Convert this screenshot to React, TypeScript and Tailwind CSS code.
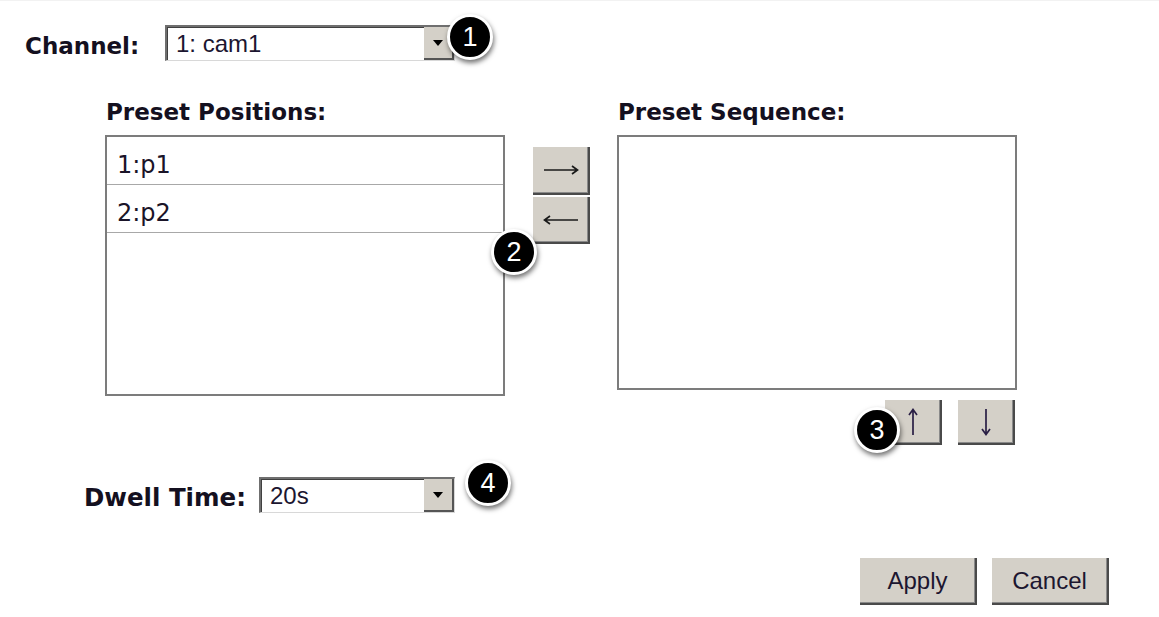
import React from 'react';

// Numbered callout bubble placed over a control
function Badge({ n, className }: { n: number; className: string }) {
  return (
    <div
      className={`absolute w-[46px] h-[46px] rounded-full bg-black border-[3px] border-white shadow-[1px_3px_5px_rgba(0,0,0,0.55)] flex items-center justify-center text-white text-[27px] font-['Liberation_Sans',Arial,sans-serif] leading-none ${className}`}
    >
      {n}
    </div>
  );
}

function Select({ value, width }: { value: string; width: string }) {
  return (
    <div
      className={`${width} h-[36px] flex bg-white border-t-2 border-l-2 border-[#6f6f6f] border-r border-b border-r-[#d8d8d8] border-b-[#d8d8d8] shadow-[inset_1px_1px_0_#404040]`}
    >
      <div className="flex-1 flex items-center pl-[9px] text-[24px] text-[#1c1630] font-['Liberation_Sans',Arial,sans-serif]">
        {value}
      </div>
      <div className="w-[30px] h-full bg-[#d4d0c8] border-r-2 border-b-2 border-[#555] flex items-center justify-center">
        <svg width="10" height="6" viewBox="0 0 10 6">
          <path d="M0 0 H10 L5 6 Z" fill="#000" />
        </svg>
      </div>
    </div>
  );
}

function ArrowH({ dir }: { dir: 'left' | 'right' }) {
  return (
    <svg width="36" height="12" viewBox="0 0 36 12">
      {dir === 'right' ? (
        <path d="M1 6 H34 M29 2 L34.5 6 L29 10" stroke="#1a1a1a" strokeWidth="1.7" fill="none" />
      ) : (
        <path d="M35 6 H2 M7 2 L1.5 6 L7 10" stroke="#1a1a1a" strokeWidth="1.7" fill="none" />
      )}
    </svg>
  );
}

function ArrowV({ dir }: { dir: 'up' | 'down' }) {
  return (
    <svg width="12" height="28" viewBox="0 0 12 28">
      {dir === 'up' ? (
        <path d="M6 27 V2 M2 7 L6 1.5 L10 7" stroke="#2a1f45" strokeWidth="1.7" fill="none" />
      ) : (
        <path d="M6 1 V26 M2 21 L6 26.5 L10 21" stroke="#2a1f45" strokeWidth="1.7" fill="none" />
      )}
    </svg>
  );
}

const btn =
  'bg-[#d4d0c8] border-r-2 border-b-2 border-[#4a4a4a] shadow-[inset_-1px_-1px_0_#8a8a8a] flex items-center justify-center';

export default function App() {
  const label = "font-['DejaVu_Sans',Verdana,sans-serif] font-bold text-[23px] text-[#141020]";

  return (
    <div className="w-[1159px] h-[617px] bg-white overflow-hidden border-t border-[#f2f2f2]">
      {/* Channel */}
      <div className="flex items-center pl-[25px] pt-[24px]">
        <div className={`${label} w-[140px] leading-[28px] pt-[6px]`}>Channel:</div>
        <div className="relative">
          <Select value="1: cam1" width="w-[290px]" />
          <Badge n={1} className="left-[282px] top-[-11px]" />
        </div>
      </div>

      {/* Preset lists */}
      <div className="flex pl-[105px] mt-[37px]">
        <div className="w-[400px]">
          <div className={`${label} leading-[28px] mb-[9px] pl-[1px] text-[23.5px]`}>Preset Positions:</div>
          <div className="h-[261px] border-2 border-[#7c7c7c] bg-white font-['DejaVu_Sans',Verdana,sans-serif] text-[24px] text-[#1a1428]">
            {['1:p1', '2:p2'].map((p) => (
              <div key={p} className="h-[48px] border-b border-[#a8a8a8] flex items-end pb-[7px] pl-[10px] leading-none">
                {p}
              </div>
            ))}
          </div>
        </div>

        <div className="relative ml-[28px] mt-[49px] w-[57px] flex flex-col gap-[2px]">
          <div className={`${btn} h-[48px]`}>
            <ArrowH dir="right" />
          </div>
          <div className={`${btn} h-[47px]`}>
            <ArrowH dir="left" />
          </div>
          <Badge n={2} className="left-[-42px] top-[82px]" />
        </div>

        <div className="w-[400px] ml-[27px]">
          <div className={`${label} leading-[28px] mb-[9px] pl-[1px] text-[23.5px]`}>Preset Sequence:</div>
          <div className="h-[255px] border-2 border-[#7c7c7c] bg-white" />
          <div className="flex justify-end gap-[16px] pr-[2px] mt-[10px]">
            <div className={`${btn} relative w-[57px] h-[45px]`}>
              <ArrowV dir="up" />
              <Badge n={3} className="left-[-31px] top-[7px]" />
            </div>
            <div className={`${btn} w-[57px] h-[45px]`}>
              <ArrowV dir="down" />
            </div>
          </div>
        </div>
      </div>

      {/* Dwell time */}
      <div className="flex items-center pl-[84px] mt-[32px]">
        <div className={`${label} w-[175px] text-[24.5px] leading-[28px] pt-[6px]`}>Dwell Time:</div>
        <div className="relative">
          <Select value="20s" width="w-[196px]" />
          <Badge n={4} className="left-[206px] top-[-17px]" />
        </div>
      </div>

      {/* Actions */}
      <div className="flex justify-end gap-[15px] pr-[50px] mt-[45px] font-['Liberation_Sans',Arial,sans-serif] text-[24px] text-[#1c1630]">
        <div className={`${btn} w-[117px] h-[47px]`}>Apply</div>
        <div className={`${btn} w-[117px] h-[47px]`}>Cancel</div>
      </div>
    </div>
  );
}
